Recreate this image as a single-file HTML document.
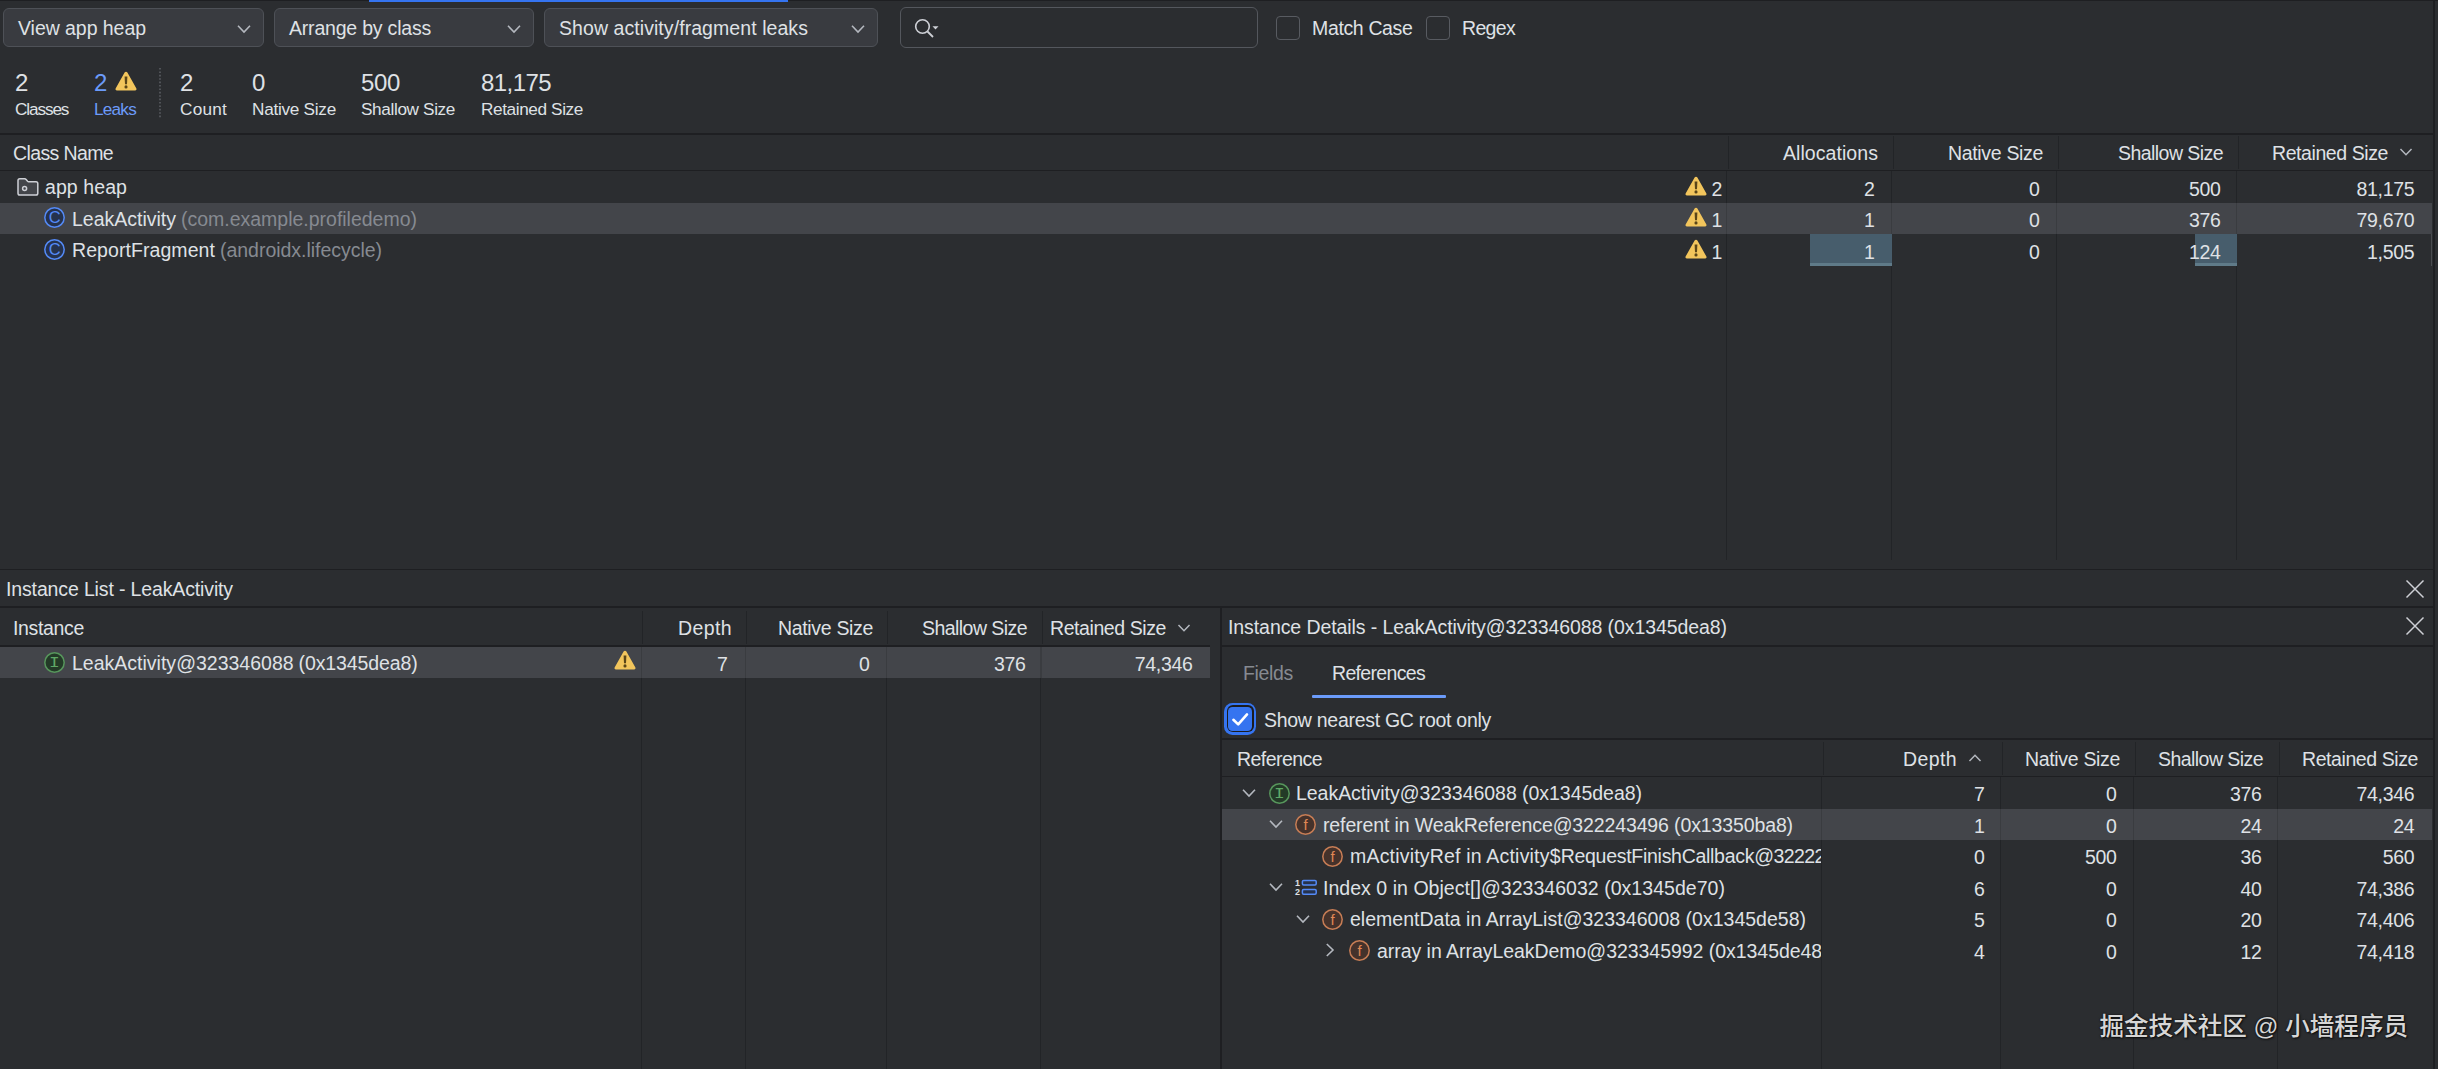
<!DOCTYPE html>
<html><head><meta charset="utf-8"><title>Heap Dump</title>
<style>
html,body{margin:0;padding:0;}
body{width:2438px;height:1069px;background:#2b2d30;position:relative;overflow:hidden;
 font-family:"Liberation Sans","Noto Sans CJK SC",sans-serif;color:#dfe1e5;font-size:19.5px;}
.a{position:absolute;}
.t{position:absolute;white-space:nowrap;}
.hl{position:absolute;background:#1e1f22;}
.vl{position:absolute;width:1.4px;background:#222427;}
.dd{position:absolute;top:8px;height:39px;background:#393b40;border:1px solid #4e5157;border-radius:6px;box-sizing:border-box;}
.cb{position:absolute;top:16.2px;width:23.8px;height:23.4px;border:1.2px solid #585b61;border-radius:4px;box-sizing:border-box;}
.sel{position:absolute;background:#43454a;}
svg{position:absolute;overflow:visible;}
svg text{font-family:"Liberation Sans",sans-serif;}
</style></head><body>

<!-- icon definitions (shapes only) -->
<svg width="0" height="0" style="left:0;top:0">
<defs>
 <g id="warn"><path d="M11 0.7 Q11.9 0.7 12.4 1.6 L21.4 17.5 Q22.1 19.3 20.3 19.4 L1.7 19.4 Q-0.1 19.3 0.6 17.5 L9.6 1.6 Q10.1 0.7 11 0.7 Z" fill="#f2c55c"/><path d="M9.6 5.6 L12.4 5.6 L12 13.2 L10 13.2 Z" fill="#5a4518"/><circle cx="11" cy="15.9" r="1.55" fill="#5a4518"/></g>
 <g id="chd"><path d="M-6 -3.2 L0 3 L6 -3.2" fill="none" stroke="#b4b8bf" stroke-width="1.6"/></g>
 <g id="chr"><path d="M-3.2 -6 L3 0 L-3.2 6" fill="none" stroke="#b4b8bf" stroke-width="1.6"/></g>
 <g id="chu"><path d="M-6 3.2 L0 -3 L6 3.2" fill="none" stroke="#b4b8bf" stroke-width="1.6"/></g>
 <g id="xx"><path d="M-8.5 -8.5 L8.5 8.5 M8.5 -8.5 L-8.5 8.5" fill="none" stroke="#ced0d6" stroke-width="1.5"/></g>
</defs></svg>

<!-- top border + active tab indicator -->
<div class="a" style="left:0;top:0;width:2438px;height:1.4px;background:#1e1f22"></div>
<div class="a" style="left:369px;top:0;width:419px;height:1.6px;background:#3574f0"></div>
<div class="a" style="left:2433.2px;top:0;width:2.2px;height:1069px;background:#1e1f22"></div>

<!-- toolbar -->
<div class="dd" style="left:3px;width:261px"></div>
<div class="dd" style="left:274px;width:260px"></div>
<div class="dd" style="left:544px;width:334px"></div>
<svg style="left:244px;top:29px" width="1" height="1"><use href="#chd"/></svg>
<svg style="left:514px;top:29px" width="1" height="1"><use href="#chd"/></svg>
<svg style="left:858px;top:29px" width="1" height="1"><use href="#chd"/></svg>

<div class="a" style="left:900px;top:7px;width:357.5px;height:41px;border:1.2px solid #54575d;border-radius:6px;box-sizing:border-box;background:#2b2d30"></div>
<svg style="left:914px;top:18px" width="28" height="22"><circle cx="8.5" cy="8.5" r="6.8" fill="none" stroke="#ced0d6" stroke-width="1.6"/><path d="M13.5 13.5 L19 19" stroke="#ced0d6" stroke-width="1.8" fill="none"/><path d="M18.5 8.3 L24.5 8.3 L21.5 11.6 Z" fill="#ced0d6"/></svg>
<div class="cb" style="left:1276.1px"></div>
<div class="cb" style="left:1426.2px"></div>

<!-- stats -->
<svg style="left:115px;top:71px" width="22" height="20"><use href="#warn"/></svg>
<svg style="left:159px;top:68px" width="3" height="52"><path d="M1 0 L1 51" stroke="#5a5d63" stroke-width="1.6" stroke-dasharray="1.6 1.8" fill="none"/></svg>

<!-- main table -->
<div class="hl" style="left:0;top:132.5px;width:2433px;height:2px"></div>
<div class="hl" style="left:0;top:169.5px;width:2433px;height:1.5px"></div>
<div class="sel" style="left:0;top:203px;width:2431.8px;height:31px"></div>
<!-- header dividers -->
<div class="vl" style="left:1727.5px;top:135.5px;height:33.5px"></div>
<div class="vl" style="left:1892.5px;top:135.5px;height:33.5px"></div>
<div class="vl" style="left:2057.5px;top:135.5px;height:33.5px"></div>
<div class="vl" style="left:2237.5px;top:135.5px;height:33.5px"></div>
<!-- body dividers -->
<div class="vl" style="left:1725.5px;top:171px;height:388.5px"></div>
<div class="vl" style="left:1890.5px;top:171px;height:388.5px"></div>
<div class="vl" style="left:2055.5px;top:171px;height:388.5px"></div>
<div class="vl" style="left:2235.5px;top:171px;height:388.5px"></div>
<div class="a" style="left:1810px;top:234px;width:82.3px;height:31.5px;background:#475d6c"></div>
<div class="a" style="left:1810px;top:263px;width:82.3px;height:2.5px;background:#5f7a88"></div>
<div class="a" style="left:2195.3px;top:234px;width:42px;height:31.5px;background:#475d6c"></div>
<div class="a" style="left:2195.3px;top:263px;width:42px;height:2.5px;background:#5f7a88"></div>
<div class="a" style="left:2431px;top:234px;width:1px;height:31.5px;background:#4a4c50"></div>
<div class="a" style="left:1725.5px;top:203px;width:1.5px;height:31px;background:#3a3c40"></div>
<div class="a" style="left:1890.5px;top:203px;width:1.5px;height:31px;background:#3a3c40"></div>
<div class="a" style="left:2055.5px;top:203px;width:1.5px;height:31px;background:#3a3c40"></div>
<div class="a" style="left:2235.5px;top:203px;width:1.5px;height:31px;background:#3a3c40"></div>
<svg style="left:2406px;top:152px" width="1" height="1"><use href="#chd" transform="scale(0.92)"/></svg>

<!-- folder icon -->
<svg style="left:17px;top:178px" width="22" height="18"><path d="M1 2.6 Q1 0.8 2.8 0.8 L7.6 0.8 Q8.5 0.8 9.1 1.5 L10.6 3.3 Q11 3.7 11.6 3.7 L19 3.7 Q20.8 3.7 20.8 5.5 L20.8 15.2 Q20.8 17 19 17 L2.8 17 Q1 17 1 15.2 Z" fill="#43454a" stroke="#ced0d6" stroke-width="1.5"/><circle cx="7.6" cy="10.4" r="2" fill="none" stroke="#ced0d6" stroke-width="1.5"/></svg>
<!-- class icons -->
<svg style="left:44px;top:207.3px" width="21" height="21"><circle cx="10.5" cy="10.5" r="9.7" fill="#25324d" stroke="#548af7" stroke-width="1.5"/><text x="10.6" y="16.4" font-size="16.5" text-anchor="middle" fill="#548af7">C</text></svg>
<svg style="left:44px;top:239.3px" width="21" height="21"><circle cx="10.5" cy="10.5" r="9.7" fill="#25324d" stroke="#548af7" stroke-width="1.5"/><text x="10.6" y="16.4" font-size="16.5" text-anchor="middle" fill="#548af7">C</text></svg>
<!-- warn icons -->
<svg style="left:1685px;top:176px" width="22" height="20"><use href="#warn"/></svg>
<svg style="left:1685px;top:207.3px" width="22" height="20"><use href="#warn"/></svg>
<svg style="left:1685px;top:239px" width="22" height="20"><use href="#warn"/></svg>

<!-- instance list -->
<div class="hl" style="left:0;top:568.7px;width:2433px;height:1.6px"></div>
<div class="hl" style="left:0;top:606.2px;width:2433px;height:2.3px"></div>
<svg style="left:2415px;top:589px" width="1" height="1"><use href="#xx"/></svg>
<div class="hl" style="left:0;top:645.2px;width:1210px;height:1.5px"></div>
<div class="sel" style="left:0;top:647px;width:1210px;height:31px"></div>
<div class="vl" style="left:642px;top:611px;height:33px"></div>
<div class="vl" style="left:746px;top:611px;height:33px"></div>
<div class="vl" style="left:886.5px;top:611px;height:33px"></div>
<div class="vl" style="left:1041.5px;top:611px;height:33px"></div>
<div class="vl" style="left:640.5px;top:647px;height:422px"></div>
<div class="vl" style="left:744.5px;top:647px;height:422px"></div>
<div class="vl" style="left:885.8px;top:647px;height:422px"></div>
<div class="vl" style="left:1040px;top:647px;height:422px"></div>
<div class="a" style="left:640.5px;top:647px;width:1.5px;height:31px;background:#3a3c40"></div>
<div class="a" style="left:744.5px;top:647px;width:1.5px;height:31px;background:#3a3c40"></div>
<div class="a" style="left:885.8px;top:647px;width:1.5px;height:31px;background:#3a3c40"></div>
<div class="a" style="left:1040px;top:647px;width:1.5px;height:31px;background:#3a3c40"></div>
<svg style="left:1184px;top:628px" width="1" height="1"><use href="#chd" transform="scale(0.92)"/></svg>
<svg style="left:44.3px;top:651.5px" width="21" height="21"><circle cx="10.5" cy="10.5" r="9.7" fill="#233a27" stroke="#57965c" stroke-width="1.5"/><text x="0" y="15.5" font-size="15" text-anchor="middle" fill="#5fa866" transform="translate(10.5 0) scale(1.2 1)" style="font-family:'Liberation Mono',monospace">I</text></svg>
<svg style="left:614px;top:650.3px" width="22" height="20"><use href="#warn"/></svg>

<!-- split divider -->
<div class="a" style="left:1219.5px;top:608px;width:2px;height:461px;background:#1e1f22"></div>

<!-- instance details -->
<svg style="left:2415px;top:626px" width="1" height="1"><use href="#xx"/></svg>
<div class="hl" style="left:1221px;top:645px;width:1212px;height:1.5px"></div>
<div class="a" style="left:1311.5px;top:694.5px;width:134px;height:3.5px;background:#6b9bfa;border-radius:1px"></div>
<!-- checked checkbox with focus ring -->
<div class="a" style="left:1224px;top:702.6px;width:32.4px;height:32.4px;border-radius:8.5px;background:#3574f0"></div>
<div class="a" style="left:1226.7px;top:705.3px;width:27px;height:27px;border-radius:6px;background:#1b1c1f"></div>
<div class="a" style="left:1228.3px;top:706.9px;width:23.8px;height:23.8px;border-radius:4.4px;background:#3574f0"></div>
<svg style="left:1228.2px;top:706.8px" width="24" height="24"><path d="M5.4 12.8 L10.2 17.4 L19 7.4" fill="none" stroke="#ffffff" stroke-width="2.6" stroke-linecap="round" stroke-linejoin="round"/></svg>
<div class="hl" style="left:1221px;top:738px;width:1212px;height:1.5px"></div>
<div class="hl" style="left:1221px;top:775.7px;width:1212px;height:1.5px"></div>
<div class="sel" style="left:1222px;top:809px;width:1209.8px;height:31px"></div>
<div class="vl" style="left:1822.5px;top:742px;height:32.5px"></div>
<div class="vl" style="left:2001.5px;top:742px;height:32.5px"></div>
<div class="vl" style="left:2134.5px;top:742px;height:32.5px"></div>
<div class="vl" style="left:2278.5px;top:742px;height:32.5px"></div>
<div class="vl" style="left:1820.5px;top:777px;height:292px"></div>
<div class="vl" style="left:1999.5px;top:777px;height:292px"></div>
<div class="vl" style="left:2132.5px;top:777px;height:292px"></div>
<div class="vl" style="left:2276.5px;top:777px;height:292px"></div>
<div class="a" style="left:1820.5px;top:809px;width:1.5px;height:31px;background:#3a3c40"></div>
<div class="a" style="left:1999.5px;top:809px;width:1.5px;height:31px;background:#3a3c40"></div>
<div class="a" style="left:2132.5px;top:809px;width:1.5px;height:31px;background:#3a3c40"></div>
<div class="a" style="left:2276.5px;top:809px;width:1.5px;height:31px;background:#3a3c40"></div>
<svg style="left:1975px;top:758px" width="1" height="1"><use href="#chu" transform="scale(0.92)"/></svg>

<!-- tree chevrons -->
<svg style="left:1249px;top:793px" width="1" height="1"><use href="#chd"/></svg>
<svg style="left:1276px;top:824px" width="1" height="1"><use href="#chd"/></svg>
<svg style="left:1276px;top:887px" width="1" height="1"><use href="#chd"/></svg>
<svg style="left:1303px;top:919px" width="1" height="1"><use href="#chd"/></svg>
<svg style="left:1329.5px;top:950px" width="1" height="1"><use href="#chr"/></svg>
<svg style="left:1268.5px;top:782.7px" width="21" height="21"><circle cx="10.5" cy="10.5" r="9.7" fill="#233a27" stroke="#57965c" stroke-width="1.5"/><text x="0" y="15.5" font-size="15" text-anchor="middle" fill="#5fa866" transform="translate(10.5 0) scale(1.2 1)" style="font-family:'Liberation Mono',monospace">I</text></svg>
<svg style="left:1295.1px;top:813.7px" width="21" height="21"><circle cx="10.5" cy="10.5" r="9.7" fill="#45322b" stroke="#c77d55" stroke-width="1.5"/><text x="10.7" y="15.6" font-size="15" text-anchor="middle" fill="#e08855">f</text></svg>
<svg style="left:1322.1px;top:845.5px" width="21" height="21"><circle cx="10.5" cy="10.5" r="9.7" fill="#45322b" stroke="#c77d55" stroke-width="1.5"/><text x="10.7" y="15.6" font-size="15" text-anchor="middle" fill="#e08855">f</text></svg>
<svg style="left:1322.1px;top:908.7px" width="21" height="21"><circle cx="10.5" cy="10.5" r="9.7" fill="#45322b" stroke="#c77d55" stroke-width="1.5"/><text x="10.7" y="15.6" font-size="15" text-anchor="middle" fill="#e08855">f</text></svg>
<svg style="left:1349.1px;top:939.7px" width="21" height="21"><circle cx="10.5" cy="10.5" r="9.7" fill="#45322b" stroke="#c77d55" stroke-width="1.5"/><text x="10.7" y="15.6" font-size="15" text-anchor="middle" fill="#e08855">f</text></svg>
<svg style="left:1295px;top:879px" width="23" height="17"><text x="0" y="7" font-size="9" font-weight="bold" fill="#dfe1e5">1</text><text x="0" y="16.2" font-size="9" font-weight="bold" fill="#dfe1e5">2</text><rect x="7.4" y="1.4" width="13.8" height="4.6" rx="1.2" fill="#25324d" stroke="#548af7" stroke-width="1.5"/><rect x="7.4" y="10.6" width="13.8" height="4.6" rx="1.2" fill="#25324d" stroke="#548af7" stroke-width="1.5"/></svg>
<div class="t" style="left:18px;top:16.0px;line-height:25px;height:25px;letter-spacing:-0.052px">View app heap</div>
<div class="t" style="left:289px;top:16.0px;line-height:25px;height:25px;letter-spacing:-0.202px">Arrange by class</div>
<div class="t" style="left:559px;top:16.0px;line-height:25px;height:25px;letter-spacing:0.068px">Show activity/fragment leaks</div>
<div class="t" style="left:1312px;top:15.7px;line-height:25px;height:25px;letter-spacing:-0.355px">Match Case</div>
<div class="t" style="left:1462px;top:15.7px;line-height:25px;height:25px;letter-spacing:-0.675px">Regex</div>
<div class="t" style="left:15px;top:66.9px;line-height:31px;height:31px;font-size:24px">2</div>
<div class="t" style="left:15px;top:97.9px;line-height:22px;height:22px;font-size:17.2px;letter-spacing:-1.12px">Classes</div>
<div class="t" style="left:94px;top:66.9px;line-height:31px;height:31px;font-size:24px;color:#6b9bfa">2</div>
<div class="t" style="left:94px;top:97.9px;line-height:22px;height:22px;font-size:17.2px;letter-spacing:-0.775px;color:#6b9bfa">Leaks</div>
<div class="t" style="left:180px;top:66.9px;line-height:31px;height:31px;font-size:24px">2</div>
<div class="t" style="left:180px;top:97.9px;line-height:22px;height:22px;font-size:17.2px;letter-spacing:0.225px">Count</div>
<div class="t" style="left:252px;top:66.9px;line-height:31px;height:31px;font-size:24px">0</div>
<div class="t" style="left:252px;top:97.9px;line-height:22px;height:22px;font-size:17.2px;letter-spacing:-0.267px">Native Size</div>
<div class="t" style="left:361px;top:66.9px;line-height:31px;height:31px;font-size:24px;letter-spacing:-0.349px">500</div>
<div class="t" style="left:361px;top:97.9px;line-height:22px;height:22px;font-size:17.2px;letter-spacing:-0.367px">Shallow Size</div>
<div class="t" style="left:481px;top:66.9px;line-height:31px;height:31px;font-size:24px;letter-spacing:-0.568px">81,175</div>
<div class="t" style="left:481px;top:97.9px;line-height:22px;height:22px;font-size:17.2px;letter-spacing:-0.386px">Retained Size</div>
<div class="t" style="left:13px;top:140.5px;line-height:25px;height:25px;letter-spacing:-0.62px">Class Name</div>
<div class="t" style="left:1783px;top:140.5px;line-height:25px;height:25px;letter-spacing:0.062px">Allocations</div>
<div class="t" style="left:1948px;top:140.5px;line-height:25px;height:25px;letter-spacing:-0.33px">Native Size</div>
<div class="t" style="left:2118px;top:140.5px;line-height:25px;height:25px;letter-spacing:-0.553px">Shallow Size</div>
<div class="t" style="left:2272px;top:140.5px;line-height:25px;height:25px;letter-spacing:-0.417px">Retained Size</div>
<div class="t" style="left:45px;top:174.5px;line-height:25px;height:25px;letter-spacing:0.082px">app heap</div>
<div class="t" style="left:72px;top:206.5px;line-height:25px;height:25px;letter-spacing:-0.004px">LeakActivity</div>
<div class="t" style="left:181px;top:206.5px;line-height:25px;height:25px;letter-spacing:-0.011px;color:#868a91">(com.example.profiledemo)</div>
<div class="t" style="left:72px;top:237.5px;line-height:25px;height:25px;letter-spacing:0.073px">ReportFragment</div>
<div class="t" style="left:220px;top:237.5px;line-height:25px;height:25px;letter-spacing:-0.028px;color:#868a91">(androidx.lifecycle)</div>
<div class="t" style="left:1711.44px;top:176.7px;line-height:25px;height:25px;letter-spacing:-0.3px">2</div>
<div class="t" style="left:1711.44px;top:207.7px;line-height:25px;height:25px;letter-spacing:-0.3px">1</div>
<div class="t" style="left:1711.44px;top:239.5px;line-height:25px;height:25px;letter-spacing:-0.3px">1</div>
<div class="t" style="left:1864.04px;top:176.7px;line-height:25px;height:25px;letter-spacing:-0.3px">2</div>
<div class="t" style="left:2029.04px;top:176.7px;line-height:25px;height:25px;letter-spacing:-0.3px">0</div>
<div class="t" style="left:2188.95px;top:176.7px;line-height:25px;height:25px;letter-spacing:-0.3px">500</div>
<div class="t" style="left:2356.44px;top:176.7px;line-height:25px;height:25px;letter-spacing:-0.3px">81,175</div>
<div class="t" style="left:1864.04px;top:207.7px;line-height:25px;height:25px;letter-spacing:-0.3px">1</div>
<div class="t" style="left:2029.04px;top:207.7px;line-height:25px;height:25px;letter-spacing:-0.3px">0</div>
<div class="t" style="left:2188.95px;top:207.7px;line-height:25px;height:25px;letter-spacing:-0.3px">376</div>
<div class="t" style="left:2356.44px;top:207.7px;line-height:25px;height:25px;letter-spacing:-0.3px">79,670</div>
<div class="t" style="left:1864.04px;top:239.5px;line-height:25px;height:25px;letter-spacing:-0.3px">1</div>
<div class="t" style="left:2029.04px;top:239.5px;line-height:25px;height:25px;letter-spacing:-0.3px">0</div>
<div class="t" style="left:2188.95px;top:239.5px;line-height:25px;height:25px;letter-spacing:-0.3px">124</div>
<div class="t" style="left:2366.99px;top:239.5px;line-height:25px;height:25px;letter-spacing:-0.3px">1,505</div>
<div class="t" style="left:6px;top:576.5px;line-height:25px;height:25px;letter-spacing:-0.138px">Instance List - LeakActivity</div>
<div class="t" style="left:13px;top:615.5px;line-height:25px;height:25px;letter-spacing:-0.34px">Instance</div>
<div class="t" style="left:678px;top:615.5px;line-height:25px;height:25px;letter-spacing:0.391px">Depth</div>
<div class="t" style="left:778px;top:615.5px;line-height:25px;height:25px;letter-spacing:-0.33px">Native Size</div>
<div class="t" style="left:922px;top:615.5px;line-height:25px;height:25px;letter-spacing:-0.553px">Shallow Size</div>
<div class="t" style="left:1050px;top:615.5px;line-height:25px;height:25px;letter-spacing:-0.417px">Retained Size</div>
<div class="t" style="left:72px;top:650.5px;line-height:25px;height:25px;letter-spacing:0.007px">LeakActivity@323346088</div>
<div class="t" style="left:298.6px;top:650.5px;line-height:25px;height:25px;letter-spacing:-0.112px">(0x1345dea8)</div>
<div class="t" style="left:717.04px;top:651.5px;line-height:25px;height:25px;letter-spacing:-0.3px">7</div>
<div class="t" style="left:859.04px;top:651.5px;line-height:25px;height:25px;letter-spacing:-0.3px">0</div>
<div class="t" style="left:993.95px;top:651.5px;line-height:25px;height:25px;letter-spacing:-0.3px">376</div>
<div class="t" style="left:1134.74px;top:651.5px;line-height:25px;height:25px;letter-spacing:-0.3px">74,346</div>
<div class="t" style="left:1228px;top:614.5px;line-height:25px;height:25px;letter-spacing:-0.079px">Instance Details - LeakActivity@323346088 (0x1345dea8)</div>
<div class="t" style="left:1243px;top:660.5px;line-height:25px;height:25px;letter-spacing:-0.339px;color:#868a91">Fields</div>
<div class="t" style="left:1332px;top:660.5px;line-height:25px;height:25px;letter-spacing:-0.672px">References</div>
<div class="t" style="left:1264px;top:707.5px;line-height:25px;height:25px;letter-spacing:-0.285px">Show nearest GC root only</div>
<div class="t" style="left:1237px;top:746.5px;line-height:25px;height:25px;letter-spacing:-0.552px">Reference</div>
<div class="t" style="left:1903px;top:746.5px;line-height:25px;height:25px;letter-spacing:0.391px">Depth</div>
<div class="t" style="left:2025px;top:746.5px;line-height:25px;height:25px;letter-spacing:-0.33px">Native Size</div>
<div class="t" style="left:2158px;top:746.5px;line-height:25px;height:25px;letter-spacing:-0.553px">Shallow Size</div>
<div class="t" style="left:2302px;top:746.5px;line-height:25px;height:25px;letter-spacing:-0.417px">Retained Size</div>
<div class="t" style="left:1296px;top:781.0px;line-height:25px;height:25px;letter-spacing:-0.034px">LeakActivity@323346088 (0x1345dea8)</div>
<div class="t" style="left:1323px;top:812.5px;line-height:25px;height:25px;letter-spacing:-0.122px">referent in WeakReference@322243496 (0x13350ba8)</div>
<div class="t" style="left:1350px;top:844.0px;line-height:25px;height:25px;letter-spacing:0.192px">mActivityRef in Activity$</div>
<div class="t" style="left:1560.7px;top:844.0px;line-height:25px;height:25px;letter-spacing:-0.283px">RequestFinishCallback</div>
<div class="t" style="left:1754.2px;top:844.0px;line-height:25px;height:25px;letter-spacing:-0.55px;width:66.79999999999995px;overflow:hidden">@322224352 (0x13350b90)</div>
<div class="t" style="left:1323px;top:875.5px;line-height:25px;height:25px;letter-spacing:0.039px">Index 0 in Object[]@323346032 (0x1345de70)</div>
<div class="t" style="left:1350px;top:907.0px;line-height:25px;height:25px;letter-spacing:0.009px">elementData in ArrayList@323346008 (0x1345de58)</div>
<div class="t" style="left:1377px;top:938.5px;line-height:25px;height:25px;letter-spacing:-0.04px;width:444px;overflow:hidden">array in ArrayLeakDemo@323345992 (0x1345de48)</div>
<div class="t" style="left:1974.04px;top:782.0px;line-height:25px;height:25px;letter-spacing:-0.3px">7</div>
<div class="t" style="left:2106.04px;top:782.0px;line-height:25px;height:25px;letter-spacing:-0.3px">0</div>
<div class="t" style="left:2229.95px;top:782.0px;line-height:25px;height:25px;letter-spacing:-0.3px">376</div>
<div class="t" style="left:2356.54px;top:782.0px;line-height:25px;height:25px;letter-spacing:-0.3px">74,346</div>
<div class="t" style="left:1974.04px;top:813.5px;line-height:25px;height:25px;letter-spacing:-0.3px">1</div>
<div class="t" style="left:2106.04px;top:813.5px;line-height:25px;height:25px;letter-spacing:-0.3px">0</div>
<div class="t" style="left:2240.5px;top:813.5px;line-height:25px;height:25px;letter-spacing:-0.3px">24</div>
<div class="t" style="left:2393.3px;top:813.5px;line-height:25px;height:25px;letter-spacing:-0.3px">24</div>
<div class="t" style="left:1974.04px;top:845.0px;line-height:25px;height:25px;letter-spacing:-0.3px">0</div>
<div class="t" style="left:2084.95px;top:845.0px;line-height:25px;height:25px;letter-spacing:-0.3px">500</div>
<div class="t" style="left:2240.5px;top:845.0px;line-height:25px;height:25px;letter-spacing:-0.3px">36</div>
<div class="t" style="left:2382.75px;top:845.0px;line-height:25px;height:25px;letter-spacing:-0.3px">560</div>
<div class="t" style="left:1974.04px;top:876.5px;line-height:25px;height:25px;letter-spacing:-0.3px">6</div>
<div class="t" style="left:2106.04px;top:876.5px;line-height:25px;height:25px;letter-spacing:-0.3px">0</div>
<div class="t" style="left:2240.5px;top:876.5px;line-height:25px;height:25px;letter-spacing:-0.3px">40</div>
<div class="t" style="left:2356.54px;top:876.5px;line-height:25px;height:25px;letter-spacing:-0.3px">74,386</div>
<div class="t" style="left:1974.04px;top:908.0px;line-height:25px;height:25px;letter-spacing:-0.3px">5</div>
<div class="t" style="left:2106.04px;top:908.0px;line-height:25px;height:25px;letter-spacing:-0.3px">0</div>
<div class="t" style="left:2240.5px;top:908.0px;line-height:25px;height:25px;letter-spacing:-0.3px">20</div>
<div class="t" style="left:2356.54px;top:908.0px;line-height:25px;height:25px;letter-spacing:-0.3px">74,406</div>
<div class="t" style="left:1974.04px;top:939.5px;line-height:25px;height:25px;letter-spacing:-0.3px">4</div>
<div class="t" style="left:2106.04px;top:939.5px;line-height:25px;height:25px;letter-spacing:-0.3px">0</div>
<div class="t" style="left:2240.5px;top:939.5px;line-height:25px;height:25px;letter-spacing:-0.3px">12</div>
<div class="t" style="left:2356.54px;top:939.5px;line-height:25px;height:25px;letter-spacing:-0.3px">74,418</div>
<div class="t" style="left:2099.5px;top:1011.0px;line-height:32px;height:32px;font-size:24.6px;letter-spacing:-0.048px;color:#d6d6d6;font-weight:500;text-shadow:0 0 2px rgba(0,0,0,.8),1px 1px 2px rgba(0,0,0,.7)">掘金技术社区 @ 小墙程序员</div>
</body></html>
